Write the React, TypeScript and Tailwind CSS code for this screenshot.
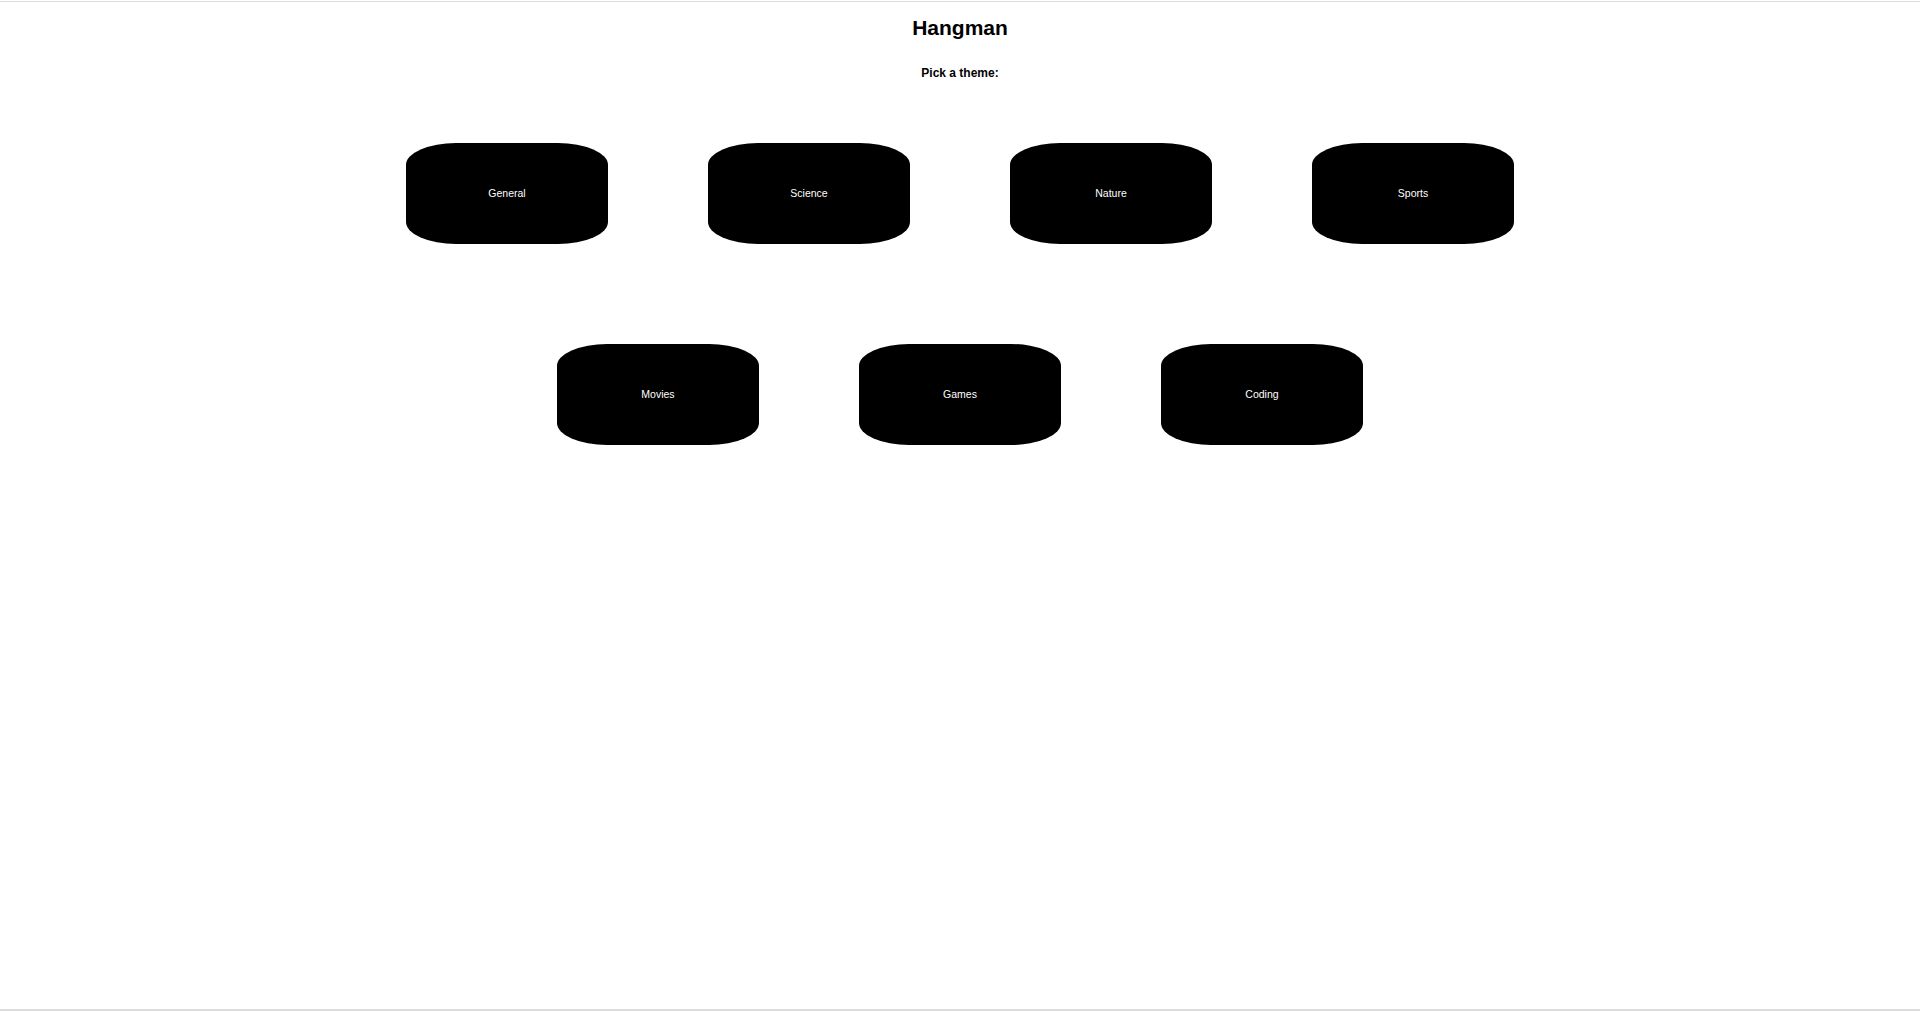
const themes = ["General", "Science", "Nature", "Sports", "Movies", "Games", "Coding"];

export default function App() {
  return (
    <div className="h-[1011px] pt-px bg-white font-['Liberation_Sans',Arial,sans-serif]">
      <div className="h-[1010px] border-t border-b-2 border-[#dcdcdc] flex flex-col items-center">
        <h1 className="mt-[14px] text-[21px] leading-[24px] font-bold text-black">Hangman</h1>
        <p className="mt-[26px] text-[12px] leading-[14px] font-bold text-black">Pick a theme:</p>
        <div className="mt-[63px] w-[1208px] flex flex-wrap justify-center gap-x-[100px] gap-y-[100px]">
          {themes.map((t) => (
            <button
              key={t}
              className="w-[202px] h-[101px] bg-black text-white text-[10.5px] rounded-[50px/22px] cursor-pointer"
            >
              {t}
            </button>
          ))}
        </div>
      </div>
    </div>
  );
}
